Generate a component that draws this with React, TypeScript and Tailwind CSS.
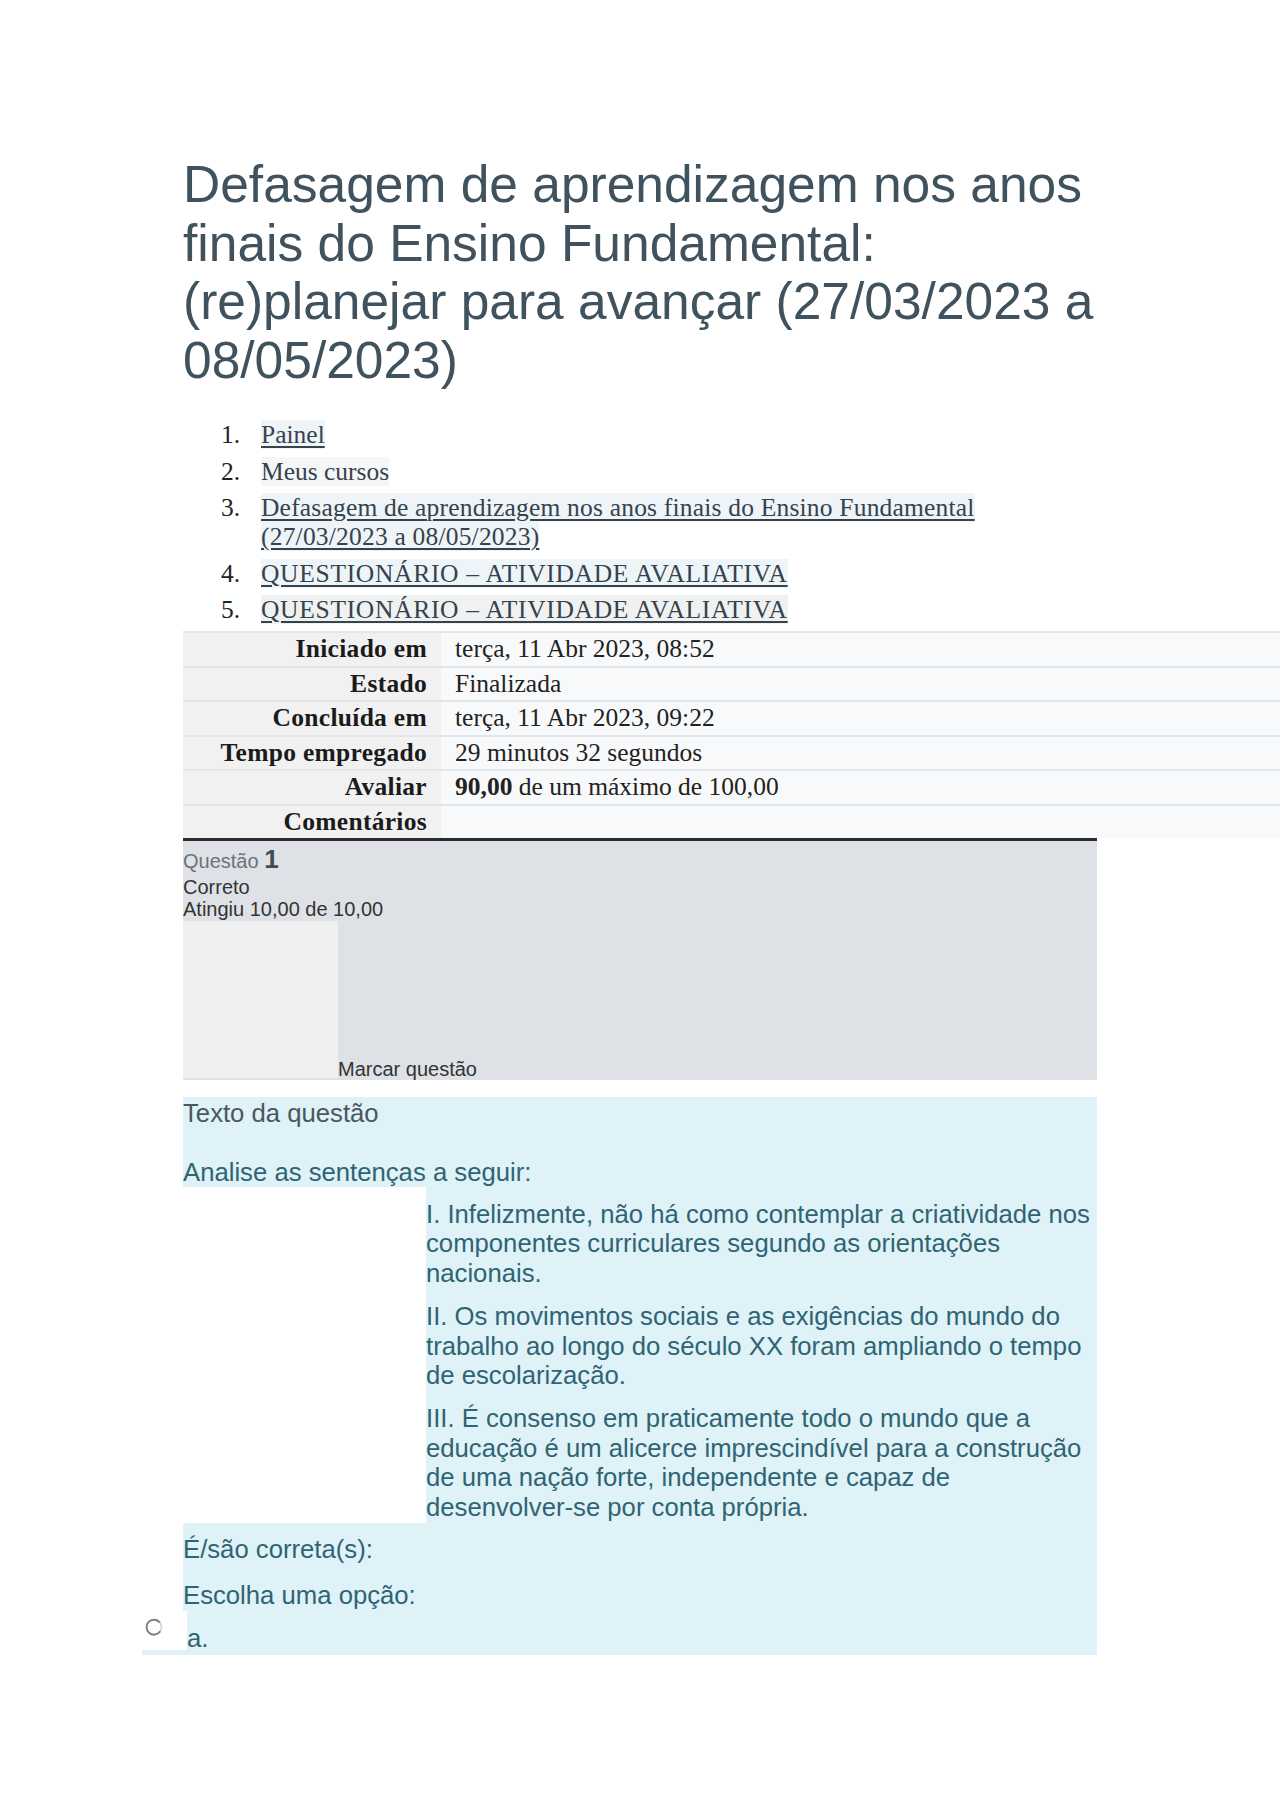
import React from "react";

const serif = "font-['Liberation_Serif','Times_New_Roman',serif]";
const sans = "font-['Liberation_Sans',Arial,sans-serif]";

function Crumb({ n, narrow, children }: { n: number; narrow?: boolean; children: React.ReactNode }) {
  return (
    <li className="flex mb-[7px] leading-[29.3px]">
      <span className="w-[57px] shrink-0 text-right text-[#222]">{n}.</span>
      <span className={`ml-[21px] ${narrow ? "w-[740px]" : "w-[836px]"}`}>{children}</span>
    </li>
  );
}

function Row({ label, children }: { label: string; children?: React.ReactNode }) {
  return (
    <div className="flex h-[34.5px] border-t-2 border-[#e3e6e9]">
      <div className="w-[258px] shrink-0 bg-[#f1f1f1] text-right pr-[14px] font-bold tracking-[0.3px] text-[#1b1b1b] leading-[32.5px]">
        {label}
      </div>
      <div className="flex-1 bg-[#f8f9fa] pl-[14px] text-[#222] leading-[32.5px]">{children}</div>
    </div>
  );
}

export default function App() {
  const link = "underline decoration-[1.5px] underline-offset-[3px] text-[#36424c]";
  return (
    <div className="w-[1280px] min-h-[1811px] bg-white">
      <div className="pl-[183px] pt-[155px]">
        <h1 className={`${sans} w-[914px] text-[51.5px] leading-[58.7px] text-[#3f525d] font-normal`}>
          Defasagem de aprendizagem nos anos finais do Ensino Fundamental: (re)planejar para avançar (27/03/2023 a
          08/05/2023)
        </h1>

        <ol className={`${serif} mt-[30.5px] text-[25.5px]`}>
          <Crumb n={1}>
            <span className={`bg-[#eef4f8] ${link}`}>Painel</span>
          </Crumb>
          <Crumb n={2}>
            <span className="bg-[#f4f6f7] text-[#36424c]">Meus cursos</span>
          </Crumb>
          <Crumb n={3} narrow>
            <span className={`bg-[#eef4f8] ${link} tracking-[0.2px] [box-decoration-break:clone]`}>
              Defasagem de aprendizagem nos anos finais do Ensino Fundamental (27/03/2023 a 08/05/2023)
            </span>
          </Crumb>
          <Crumb n={4}>
            <span className={`bg-[#eef5f9] ${link} tracking-[0.7px]`}>QUESTIONÁRIO – ATIVIDADE AVALIATIVA</span>
          </Crumb>
          <Crumb n={5}>
            <span className={`bg-[#f0f1f1] ${link} tracking-[0.7px]`}>QUESTIONÁRIO – ATIVIDADE AVALIATIVA</span>
          </Crumb>
        </ol>

        <div className={`${serif} w-[1097px] text-[25.5px]`}>
          <Row label="Iniciado em">terça, 11 Abr 2023, 08:52</Row>
          <Row label="Estado">Finalizada</Row>
          <Row label="Concluída em">terça, 11 Abr 2023, 09:22</Row>
          <Row label="Tempo empregado">29 minutos 32 segundos</Row>
          <Row label="Avaliar">
            <b>90,00</b> de um máximo de 100,00
          </Row>
          <Row label="Comentários" />
        </div>

        <div className={`${sans} w-[914px] bg-[#dee2e6] border-t-[3px] border-[#2b2b2b] text-[20px]`}>
          <div className="pt-[3px] leading-[30px] text-[#6a737b]">
            Questão <span className="text-[26px] font-bold text-[#3f4b53]">1</span>
          </div>
          <div className="leading-[22px] text-[#333]">Correto</div>
          <div className="leading-[22px] text-[#333]">Atingiu 10,00 de 10,00</div>
          <div className="flex items-end mt-[1px]">
            <div className="w-[155px] h-[157px] bg-[#f0f0f1] mb-[2px]"></div>
            <div className="leading-[22px] text-[#333]">Marcar questão</div>
          </div>
        </div>

        <div className={`${sans} w-[914px] mt-[17px] text-[25.7px] leading-[29.4px] text-[#2f6473]`}>
          <div className="bg-[#def2f8] pt-[1.5px]">
            <div className="text-[#4b575f]">Texto da questão</div>
            <p className="mt-[29.5px]">Analise as sentenças a seguir:</p>
          </div>
          <div className="ml-[243px] bg-[#def2f8] pb-[1px]">
            <p className="pt-[13px]">
              I. Infelizmente, não há como contemplar a criatividade nos componentes curriculares segundo as orientações
              nacionais.
            </p>
            <p className="mt-[14px]">
              II. Os movimentos sociais e as exigências do mundo do trabalho ao longo do século XX foram ampliando o
              tempo de escolarização.
            </p>
            <p className="mt-[14px]">
              III. É consenso em praticamente todo o mundo que a educação é um alicerce imprescindível para a
              construção de uma nação forte, independente e capaz de desenvolver-se por conta própria.
            </p>
          </div>
          <div className="bg-[#def2f8] pt-[12.5px]">
            <p>É/são correta(s):</p>
            <p className="mt-[16.5px]">Escolha uma opção:</p>
            <div className="ml-[-41px] flex h-[44px] bg-[#def2f8]">
              <div className="relative w-[45px] h-[39px] bg-white self-start shrink-0">
                <svg width="20" height="22" viewBox="0 0 20 22" className="absolute left-[2px] top-[5px]">
                  <circle cx="10" cy="11" r="7.5" fill="none" stroke="#cfd2d5" strokeWidth="1.6" />
                  <path
                    d="M15.8 6.3 A7.5 7.5 0 1 0 16.3 15.3"
                    fill="none"
                    stroke="#7d8389"
                    strokeWidth="2"
                  />
                </svg>
              </div>
              <div className="self-end mb-[1px]">a.</div>
            </div>
          </div>
        </div>
      </div>
    </div>
  );
}
